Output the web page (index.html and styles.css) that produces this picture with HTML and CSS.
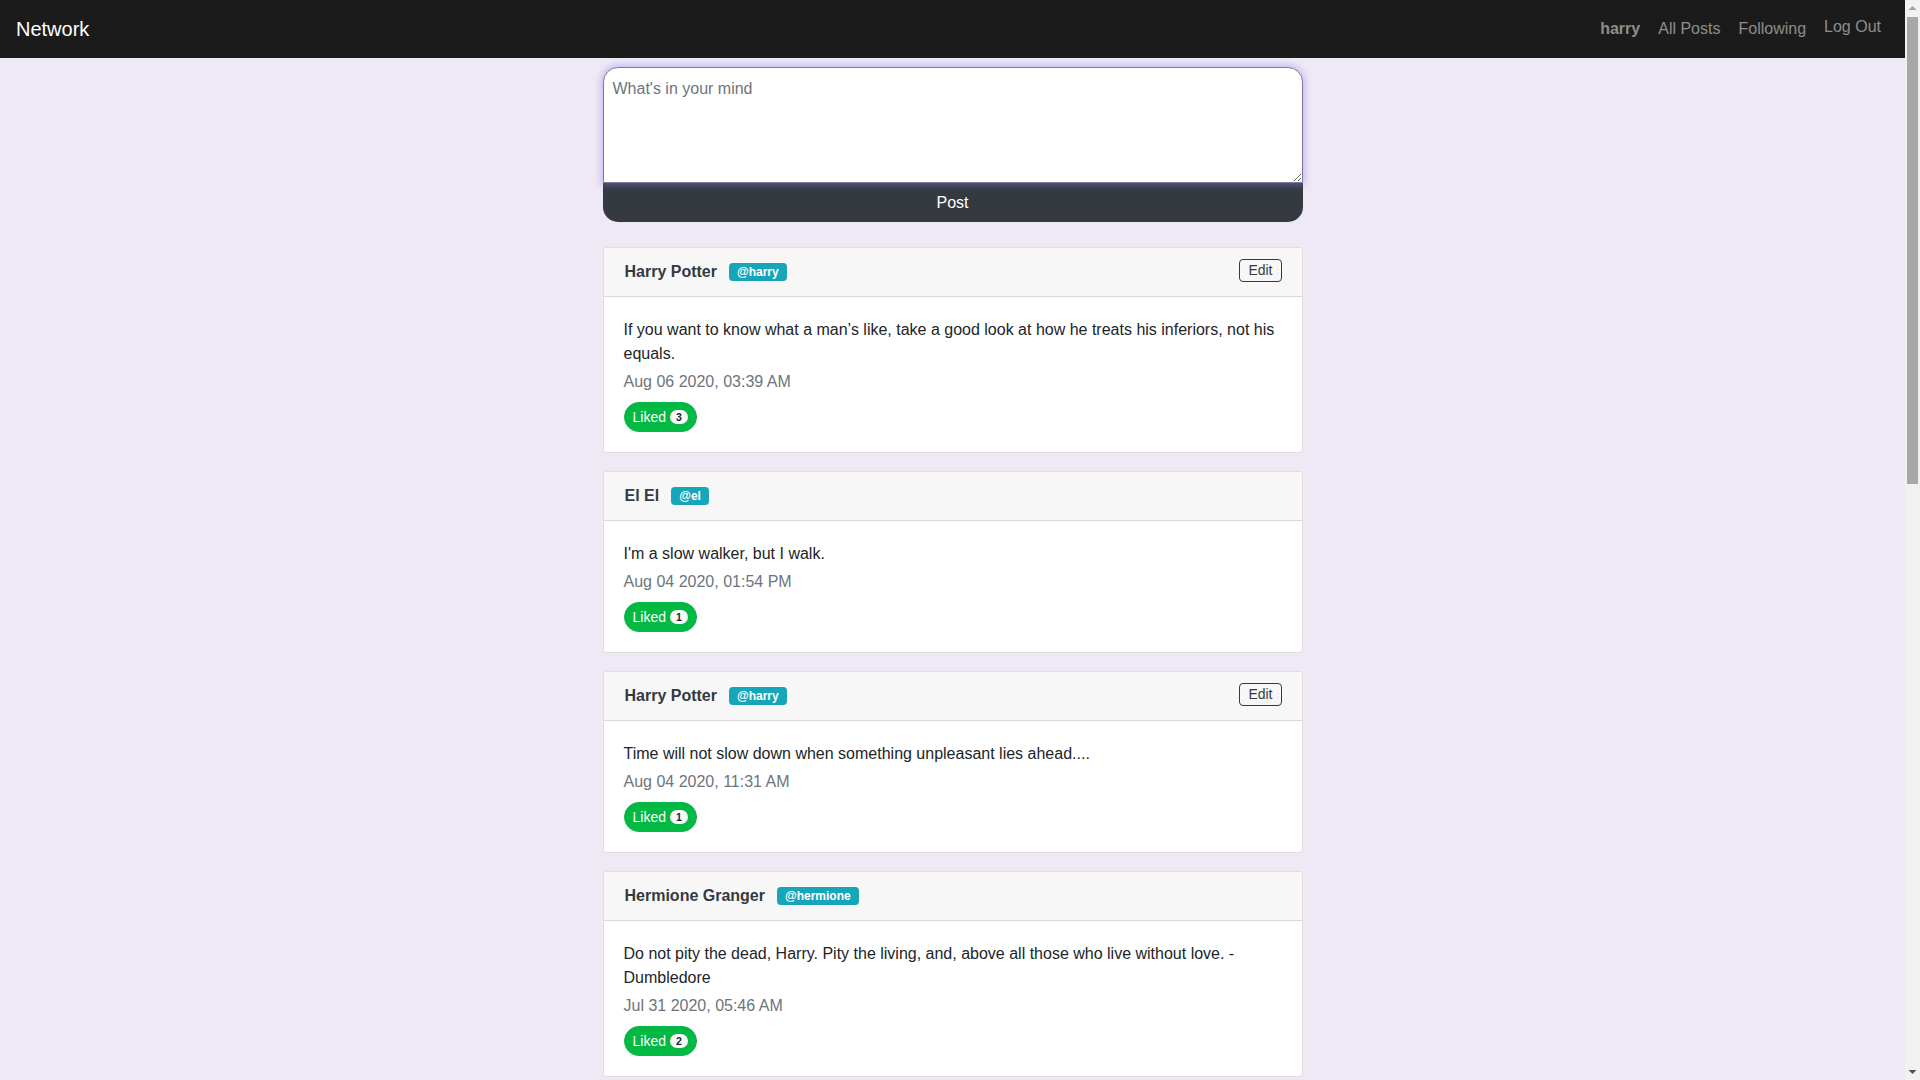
FILE: index.html
```html
<!DOCTYPE html>
<html lang="en">
<head>
<meta charset="utf-8">
<title>Network</title>
<link rel="stylesheet" href="styles.css">
</head>
<body>
<div class="page">
  <nav class="navbar">
    <a class="brand" href="#">Network</a>
    <ul class="nav">
      <li><a class="nav-link" href="#"><strong>harry</strong></a></li>
      <li><a class="nav-link" href="#">All Posts</a></li>
      <li><a class="nav-link" href="#">Following</a></li>
      <li><a class="nav-link nav-logout" href="#">Log Out</a></li>
    </ul>
  </nav>

  <main class="container">
    <form class="compose">
      <textarea class="compose-input" rows="4" placeholder="What's in your mind"></textarea>
      <button class="compose-btn" type="button">Post</button>
    </form>

    <div class="feed">
      <div class="card">
        <div class="card-header">
          <div class="author"><span class="author-name">Harry Potter</span><span class="handle">@harry</span></div>
          <button class="edit-btn" type="button">Edit</button>
        </div>
        <div class="card-body">
          <p class="post-text">If you want to know what a man’s like, take a good look at how he treats his inferiors, not his equals.</p>
          <div class="post-date">Aug 06 2020, 03:39 AM</div>
          <button class="like-btn" type="button">Liked <span class="like-count">3</span></button>
        </div>
      </div>

      <div class="card">
        <div class="card-header">
          <div class="author"><span class="author-name">El El</span><span class="handle">@el</span></div>
        </div>
        <div class="card-body">
          <p class="post-text">I'm a slow walker, but I walk.</p>
          <div class="post-date">Aug 04 2020, 01:54 PM</div>
          <button class="like-btn" type="button">Liked <span class="like-count">1</span></button>
        </div>
      </div>

      <div class="card">
        <div class="card-header">
          <div class="author"><span class="author-name">Harry Potter</span><span class="handle">@harry</span></div>
          <button class="edit-btn" type="button">Edit</button>
        </div>
        <div class="card-body">
          <p class="post-text">Time will not slow down when something unpleasant lies ahead....</p>
          <div class="post-date">Aug 04 2020, 11:31 AM</div>
          <button class="like-btn" type="button">Liked <span class="like-count">1</span></button>
        </div>
      </div>

      <div class="card">
        <div class="card-header">
          <div class="author"><span class="author-name">Hermione Granger</span><span class="handle">@hermione</span></div>
        </div>
        <div class="card-body">
          <p class="post-text">Do not pity the dead, Harry. Pity the living, and, above all those who live without love. - Dumbledore</p>
          <div class="post-date">Jul 31 2020, 05:46 AM</div>
          <button class="like-btn" type="button">Liked <span class="like-count">2</span></button>
        </div>
      </div>
    </div>
  </main>
</div>

<div class="scrollbar" aria-hidden="true">
  <div class="sb-arrow">
    <svg width="15" height="17" viewBox="0 0 15 17"><polygon points="3.5,10 7.5,6 11.5,10" fill="#a3a3a3"/></svg>
  </div>
  <div class="sb-track">
    <div class="sb-thumb"></div>
  </div>
  <div class="sb-arrow">
    <svg width="15" height="17" viewBox="0 0 15 17"><polygon points="3.5,7 7.5,11 11.5,7" fill="#505050"/></svg>
  </div>
</div>
</body>
</html>
```

FILE: styles.css
```css
* {
  box-sizing: border-box;
}

html, body {
  margin: 0;
  padding: 0;
}

body {
  background: #efe9f5;
  color: #212529;
  font-family: "Liberation Sans", Arial, sans-serif;
  font-size: 16px;
  line-height: 1.5;
}

.page {
  margin-right: 15px;
}

/* Navbar */
.navbar {
  height: 58px;
  background: #1b1b1b;
  display: flex;
  align-items: center;
  justify-content: space-between;
  padding: 0 16px;
}

.brand {
  color: #ffffff;
  font-size: 20px;
  line-height: 30px;
  text-decoration: none;
}

.nav {
  list-style: none;
  margin: 0;
  padding: 0;
  display: flex;
  align-items: center;
  gap: 2px;
}

.nav-link {
  display: block;
  padding: 8px;
  color: rgba(255, 255, 255, 0.5);
  text-decoration: none;
  line-height: 24px;
}

.nav-link strong {
  font-weight: 700;
}

.nav-logout {
  padding-top: 6px;
  padding-bottom: 10px;
}

/* Container */
.container {
  width: 700px;
  margin: 0 auto;
  padding: 9px 0 0;
}

/* Compose form */
.compose {
  display: flex;
  flex-direction: column;
  margin: 0;
}

.compose-input {
  position: relative;
  z-index: 1;
  display: block;
  width: 100%;
  margin: 0;
  padding: 9px;
  font-family: "Liberation Sans", Arial, sans-serif;
  font-size: 16px;
  line-height: 24px;
  color: #495057;
  background: #ffffff;
  border: 1px solid #7f7a96;
  border-radius: 15px 15px 0 0;
  box-shadow: 0 0 7px 2px rgba(150, 125, 235, 0.45);
  outline: none;
}

.compose-input::placeholder {
  color: #6c757d;
  opacity: 1;
}

.compose-btn {
  display: block;
  width: 100%;
  margin: 0;
  padding: 8px 12px 7px;
  border: 0;
  border-radius: 0 0 15px 15px;
  background: #343a40;
  color: #ffffff;
  font-family: "Liberation Sans", Arial, sans-serif;
  font-size: 16px;
  line-height: 24px;
  cursor: pointer;
}

/* Feed */
.feed {
  display: flex;
  flex-direction: column;
  gap: 18px;
  margin-top: 25px;
}

.card {
  background: #ffffff;
  border: 1px solid rgba(0, 0, 0, 0.125);
  border-radius: 4px;
  overflow: hidden;
}

.card-header {
  display: flex;
  align-items: flex-start;
  justify-content: space-between;
  padding: 12px 20px 12px 21px;
  background: #f7f7f7;
  border-bottom: 1px solid rgba(0, 0, 0, 0.125);
}

.author {
  line-height: 24px;
}

.author-name {
  font-weight: 700;
  font-size: 16px;
  color: #343a40;
}

.handle {
  display: inline-block;
  margin-left: 12px;
  padding: 3px 8px;
  font-size: 12px;
  font-weight: 700;
  line-height: 1;
  color: #ffffff;
  background: #17a5ba;
  border-radius: 4px;
  vertical-align: 1px;
}

.edit-btn {
  margin-top: -1px;
  padding: 0 8px;
  font-family: "Liberation Sans", Arial, sans-serif;
  font-size: 14px;
  line-height: 21px;
  color: #343a40;
  background: transparent;
  border: 1px solid #343a40;
  border-radius: 4px;
  cursor: pointer;
}

.card-body {
  padding: 21px 20px 20px;
}

.post-text {
  margin: 0;
  line-height: 24px;
}

.post-date {
  margin-top: 4px;
  color: #6c757d;
  line-height: 24px;
}

.like-btn {
  display: inline-flex;
  align-items: center;
  gap: 4px;
  margin-top: 8px;
  padding: 4px 8px;
  font-family: "Liberation Sans", Arial, sans-serif;
  font-size: 14px;
  line-height: 20px;
  color: #ffffff;
  background: #03b944;
  border: 1px solid #03b944;
  border-radius: 50rem;
  cursor: pointer;
}

.like-count {
  display: inline-block;
  padding: 2px 6px;
  font-size: 10.5px;
  font-weight: 700;
  line-height: 1;
  color: #212529;
  background: #f8f9fa;
  border-radius: 50rem;
}

/* Window scrollbar */
.scrollbar {
  position: fixed;
  top: 0;
  right: 0;
  width: 15px;
  height: 100vh;
  background: #f1f1f1;
  display: flex;
  flex-direction: column;
}

.sb-arrow {
  height: 17px;
  flex: none;
}

.sb-arrow svg {
  display: block;
}

.sb-track {
  flex: 1;
  padding: 0 2px;
}

.sb-thumb {
  height: 467px;
  background: #a8a8a8;
}
```
